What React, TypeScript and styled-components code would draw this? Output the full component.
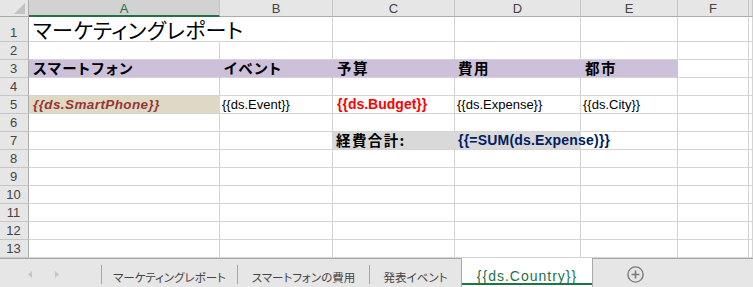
import { Fragment, ReactNode } from 'react';
import styled, { createGlobalStyle } from 'styled-components';

const GlobalStyle = createGlobalStyle`
  html, body {
    margin: 0;
    padding: 0;
    background: #fff;
    overflow: hidden;
  }
  body {
    font-family: 'Liberation Sans', 'Noto Sans CJK JP', sans-serif;
  }
`;

const CJK = `'Noto Sans CJK JP', 'Liberation Sans', sans-serif`;
const GRID = '#d4d4d4';
const HEAD_BG = '#e6e6e6';
const EXCEL_GREEN = '#217346';

const Page = styled.div`
  width: 753px;
  height: 287px;
  display: flex;
  flex-direction: column;
  overflow: hidden;
`;

const Sheet = styled.div`
  display: grid;
  grid-template-columns: 29px 191px 113px 122px 126px 97px 71px 1fr;
  grid-template-rows: 17px 25px repeat(12, 18px);
`;

const Corner = styled.div`
  box-sizing: border-box;
  background: ${HEAD_BG};
  border-right: 1px solid #ababab;
  border-bottom: 1px solid #ababab;
  display: flex;
  align-items: flex-end;
  justify-content: flex-end;
  padding: 0 3px 2px 0;
`;

const ColHead = styled.div<{ $active?: boolean }>`
  box-sizing: border-box;
  background: ${(p) => (p.$active ? '#d2d2d2' : HEAD_BG)};
  color: ${(p) => (p.$active ? EXCEL_GREEN : '#444')};
  border-right: 1px solid #c6c6c6;
  border-bottom: ${(p) => (p.$active ? `2px solid ${EXCEL_GREEN}` : '1px solid #ababab')};
  display: flex;
  align-items: center;
  justify-content: center;
  font-size: 13px;
  line-height: 15px;
  padding-top: 1px;
`;

const RowHead = styled.div`
  box-sizing: border-box;
  background: ${HEAD_BG};
  color: #444;
  border-right: 1px solid #ababab;
  border-bottom: 1px solid #c6c6c6;
  display: flex;
  align-items: flex-end;
  justify-content: center;
  font-size: 13px;
  line-height: 15px;
  padding: 0 1px 1px 0;
`;

const Cell = styled.div<{ $fill?: string; $pad?: number; $open?: boolean; $raise?: boolean }>`
  box-sizing: border-box;
  position: relative;
  z-index: ${(p) => (p.$raise ? 1 : 0)};
  display: flex;
  align-items: flex-end;
  padding: 0 0 1px ${(p) => p.$pad ?? 2}px;
  background: ${(p) => p.$fill ?? '#fff'};
  border-right: 1px solid ${(p) => (p.$open ? 'transparent' : p.$fill ?? GRID)};
  border-bottom: 1px solid ${GRID};
  white-space: nowrap;
  overflow: visible;
`;

const Title = styled.span`
  font-family: ${CJK};
  font-size: 21px;
  line-height: 22px;
  font-feature-settings: 'palt';
  letter-spacing: 0.4px;
  color: #000;
`;

const Label = styled.span`
  font-family: ${CJK};
  font-size: 14.5px;
  line-height: 16px;
  font-weight: 700;
  font-feature-settings: 'palt';
  letter-spacing: 1.4px;
  color: #000;
`;

const Field = styled.span<{
  $color?: string;
  $bold?: boolean;
  $italic?: boolean;
  $size?: number;
  $spacing?: number;
}>`
  font-family: 'Liberation Sans', sans-serif;
  font-size: ${(p) => p.$size ?? 13}px;
  line-height: 15px;
  font-weight: ${(p) => (p.$bold ? 700 : 400)};
  font-style: ${(p) => (p.$italic ? 'italic' : 'normal')};
  letter-spacing: ${(p) => p.$spacing ?? 0}px;
  color: ${(p) => p.$color ?? '#000'};
`;

const TabBar = styled.div`
  box-sizing: border-box;
  height: 29px;
  display: flex;
  align-items: stretch;
  background: ${HEAD_BG};
  border-top: 1px solid #a8a8a8;
  font-family: ${CJK};
`;

const Nav = styled.div`
  width: 101px;
  display: flex;
  align-items: center;
  gap: 23px;
  padding: 2px 0 0 28px;
  box-sizing: border-box;
`;

const Separator = styled.div`
  width: 1px;
  height: 19px;
  align-self: center;
  margin-top: 2px;
  background: #a6a6a6;
`;

const Tab = styled.div<{ $width: number }>`
  width: ${(p) => p.$width}px;
  display: flex;
  align-items: flex-end;
  justify-content: center;
  padding-bottom: 3px;
  box-sizing: border-box;
  font-size: 11.5px;
  line-height: 14px;
  font-feature-settings: 'palt';
  color: #444;
  white-space: nowrap;
`;

const ActiveTab = styled.div`
  position: relative;
  width: 132px;
  margin-top: -1px;
  box-sizing: border-box;
  background: #fff;
  border-left: 1px solid #a8a8a8;
  border-right: 1px solid #a8a8a8;
  display: flex;
  align-items: flex-end;
  justify-content: center;
  padding-bottom: 3px;
  font-family: 'Liberation Sans', sans-serif;
  font-size: 14px;
  line-height: 15px;
  letter-spacing: 1px;
  color: ${EXCEL_GREEN};
  white-space: nowrap;

  &::after {
    content: '';
    position: absolute;
    left: 0;
    right: 0;
    bottom: 2px;
    height: 2px;
    background: ${EXCEL_GREEN};
  }
`;

const AddSheet = styled.div`
  display: flex;
  align-items: center;
  margin-left: 34px;
  padding-top: 2px;
`;

type CellDef = {
  fill?: string;
  pad?: number;
  open?: boolean;
  raise?: boolean;
  content?: ReactNode;
};

const COLS = ['A', 'B', 'C', 'D', 'E', 'F', 'G'];
const PURPLE = '#ccc0da';
const TAN = '#ddd9c4';
const GRAY = '#d9d9d9';

const cells: Record<number, Record<string, CellDef>> = {
  1: {
    A: { pad: 4, open: true, raise: true, content: <Title>マーケティングレポート</Title> },
  },
  3: {
    A: { fill: PURPLE, pad: 4, content: <Label>スマートフォン</Label> },
    B: { fill: PURPLE, pad: 4, content: <Label>イベント</Label> },
    C: { fill: PURPLE, pad: 4, content: <Label>予算</Label> },
    D: { fill: PURPLE, pad: 3, content: <Label>費用</Label> },
    E: { fill: PURPLE, pad: 4, content: <Label>都市</Label> },
  },
  5: {
    A: {
      fill: TAN,
      pad: 4,
      content: (
        <Field $color="#953735" $bold $italic $size={13.5} $spacing={0.4}>
          {'{{ds.SmartPhone}}'}
        </Field>
      ),
    },
    B: { content: <Field>{'{{ds.Event}}'}</Field> },
    C: {
      pad: 4,
      content: (
        <Field $color="#ff0000" $bold $size={14}>
          {'{{ds.Budget}}'}
        </Field>
      ),
    },
    D: { pad: 2, content: <Field>{'{{ds.Expense}}'}</Field> },
    E: { pad: 2, content: <Field>{'{{ds.City}}'}</Field> },
  },
  7: {
    C: { fill: GRAY, pad: 3, content: <Label>経費合計:</Label> },
    D: {
      fill: GRAY,
      pad: 3,
      raise: true,
      content: (
        <Field $color="#002060" $bold $size={14} $spacing={0.2}>
          {'{{=SUM(ds.Expense)}}'}
        </Field>
      ),
    },
  },
};

const ROWS = Array.from({ length: 13 }, (_, i) => i + 1);

const CornerMark = () => (
  <svg width="11" height="11" viewBox="0 0 11 11">
    <path d="M11 0 L11 11 L0 11 Z" fill="#c2c2c2" />
  </svg>
);

const Arrow = ({ dir }: { dir: 'left' | 'right' }) => (
  <svg width="4" height="7" viewBox="0 0 4 7">
    <path d={dir === 'left' ? 'M4 0 L0 3.5 L4 7 Z' : 'M0 0 L4 3.5 L0 7 Z'} fill="#c4c4c4" />
  </svg>
);

const PlusCircle = () => (
  <svg width="17" height="17" viewBox="0 0 17 17">
    <circle cx="8.5" cy="8.5" r="7.6" fill="none" stroke="#7a7a7a" strokeWidth="1.4" />
    <path d="M8.5 4.6 V12.4 M4.6 8.5 H12.4" stroke="#7a7a7a" strokeWidth="1.6" />
  </svg>
);

export default function App() {
  return (
    <Page>
      <GlobalStyle />
      <Sheet>
        <Corner>
          <CornerMark />
        </Corner>
        {COLS.map((c) => (
          <ColHead key={c} $active={c === 'A'}>
            {c === 'G' ? '' : c}
          </ColHead>
        ))}
        {ROWS.map((r) => (
          <Fragment key={r}>
            <RowHead>{r}</RowHead>
            {COLS.map((c) => {
              const d = cells[r]?.[c];
              return (
                <Cell key={c} $fill={d?.fill} $pad={d?.pad} $open={d?.open} $raise={d?.raise}>
                  {d?.content}
                </Cell>
              );
            })}
          </Fragment>
        ))}
      </Sheet>
      <TabBar>
        <Nav>
          <Arrow dir="left" />
          <Arrow dir="right" />
        </Nav>
        <Separator />
        <Tab $width={135}>マーケティングレポート</Tab>
        <Separator />
        <Tab $width={131}>スマートフォンの費用</Tab>
        <Separator />
        <Tab $width={91}>発表イベント</Tab>
        <ActiveTab>{'{{ds.Country}}'}</ActiveTab>
        <AddSheet>
          <PlusCircle />
        </AddSheet>
      </TabBar>
    </Page>
  );
}
